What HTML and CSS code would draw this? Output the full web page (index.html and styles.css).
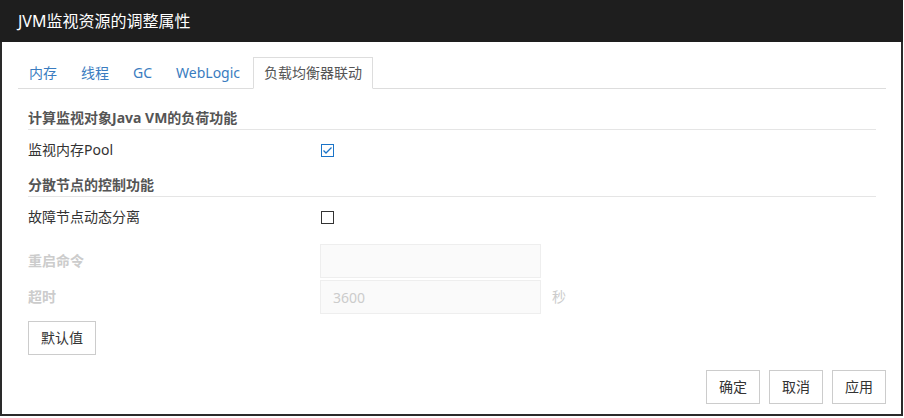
FILE: index.html
```html
<!DOCTYPE html>
<html>
	<head>
		<title>JVM监视资源的调整属性</title>
		<meta charset="utf-8">
		<link rel="stylesheet" href="styles.css">
	</head>
	<body>
		<div class="dialog">
			<div class="titlu">JVM监视资源的调整属性</div>
			<div class="continut">
				<ul class="taburi">
					<li class="tab">内存</li>
					<li class="tab">线程</li>
					<li class="tab">GC</li>
					<li class="tab">WebLogic</li>
					<li class="tab activ">负载均衡器联动</li>
				</ul>
				<div class="panou">
					<div class="sectiune">计算监视对象Java VM的负荷功能</div>
					<div class="rand">
						<label class="eticheta">监视内存Pool</label>
						<span class="bifa">
							<svg width="13" height="13" viewBox="0 0 13 13">
								<rect x="0.5" y="0.5" width="12" height="12" fill="#fff" stroke="#1b74c8" />
								<polyline points="2.5,6.5 5,9 10.5,3.5" fill="none" stroke="#1b74c8" stroke-width="1.3" />
							</svg>
						</span>
					</div>
					<div class="sectiune">分散节点的控制功能</div>
					<div class="rand">
						<label class="eticheta">故障节点动态分离</label>
						<span class="bifa">
							<svg width="13" height="13" viewBox="0 0 13 13">
								<rect x="0.5" y="0.5" width="12" height="12" fill="#fff" stroke="#333" />
							</svg>
						</span>
					</div>
					<div class="rand rand-camp primul">
						<label class="eticheta dezactivat">重启命令</label>
						<input class="camp" type="text" disabled />
					</div>
					<div class="rand rand-camp">
						<label class="eticheta dezactivat">超时</label>
						<input class="camp" type="text" placeholder="3600" disabled />
						<span class="unitate">秒</span>
					</div>
					<button class="buton implicit">默认值</button>
				</div>
				<div class="subsol">
					<button class="buton">确定</button>
					<button class="buton">取消</button>
					<button class="buton">应用</button>
				</div>
			</div>
		</div>
	</body>
</html>
```
FILE: styles.css
```css
body{
	margin: 0px;
	font-family: "Noto Sans", "Noto Sans CJK SC", sans-serif;
	font-size: 14px;
	line-height: 20px;
	color: #333333;
	background-color: #ffffff;
}

	.dialog {
		box-sizing: border-box;
		width: 903px;
		height: 416px;
		border: 2px solid #2a2a2a;
		border-top: none;
		background-color: #ffffff;
	}

	.titlu {
		height: 42px;
		line-height: 42px;
		margin: 0px -2px;
		padding-left: 18px;
		background-color: #1e1e1e;
		color: #ffffff;
		font-size: 16px;
	}

	.continut {
		padding: 0px 15px 0px 16px;
	}

	.taburi {
		display: flex;
		list-style: none;
		margin: 15px 0px 0px 0px;
		padding: 0px;
		border-bottom: 1px solid #dddddd;
	}

	.tab {
		padding: 5px 10px;
		margin-right: 2px;
		margin-bottom: -1px;
		border: 1px solid transparent;
		color: #3a7cc0;
	}

	.activ {
		color: #555555;
		border-color: #dddddd;
		border-bottom-color: #ffffff;
		background-color: #ffffff;
	}

	.panou {
		padding: 0px 10px;
	}

	.sectiune {
		margin-top: 19px;
		padding-bottom: 1px;
		border-bottom: 1px solid #e5e5e5;
		font-weight: bold;
		color: #555555;
	}

	.sectiune + .rand {
		margin-top: 3px;
	}

	.rand + .sectiune {
		margin-top: 8px;
	}

	.rand {
		display: flex;
		align-items: center;
		height: 34px;
	}

	.eticheta {
		width: 292px;
		flex-shrink: 0;
	}

	.bifa {
		display: flex;
		margin-left: 1px;
	}

	.rand-camp {
		margin-top: 2px;
	}

	.primul {
		margin-top: 10px;
	}

	.dezactivat {
		font-weight: bold;
		color: #cccccc;
	}

	.camp {
		box-sizing: border-box;
		width: 221px;
		height: 34px;
		padding: 0px 12px;
		border: 1px solid #eeeeee;
		background-color: #fafafa;
		font-family: inherit;
		font-size: 14px;
		outline: none;
	}

	.camp::placeholder {
		color: #cccccc;
	}

	.unitate {
		margin-left: 11px;
		color: #cccccc;
	}

	.buton {
		height: 34px;
		padding: 0px 12px;
		border: 1px solid #cccccc;
		background-color: #ffffff;
		color: #333333;
		font-family: inherit;
		font-size: 14px;
		line-height: 20px;
	}

	.implicit {
		margin-top: 7px;
	}

	.subsol {
		display: flex;
		justify-content: flex-end;
		gap: 9px;
		margin-top: 15px;
	}
```
